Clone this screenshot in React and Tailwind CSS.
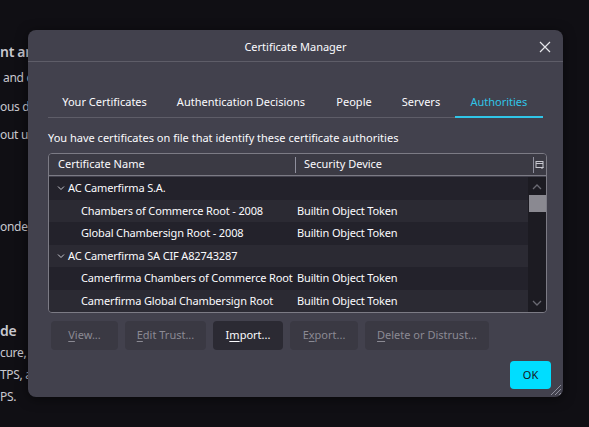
import React from 'react';

const rows = [
    { kind: 'group', name: 'AC Camerfirma S.A.', device: '' },
    { kind: 'item', name: 'Chambers of Commerce Root - 2008', device: 'Builtin Object Token' },
    { kind: 'item', name: 'Global Chambersign Root - 2008', device: 'Builtin Object Token' },
    { kind: 'group', name: 'AC Camerfirma SA CIF A82743287', device: '' },
    { kind: 'item', name: 'Camerfirma Chambers of Commerce Root', device: 'Builtin Object Token' },
    { kind: 'item', name: 'Camerfirma Global Chambersign Root', device: 'Builtin Object Token' },
];

const tabs = [
    { label: 'Your Certificates', w: 'w-[114px]' },
    { label: 'Authentication Decisions', w: 'w-[161px]' },
    { label: 'People', w: 'w-[67px]' },
    { label: 'Servers', w: 'w-[68px]' },
    { label: 'Authorities', w: 'w-[89px]' },
];

const Btn = ({ pre, u, post, enabled, w }) => (
    <button
        className={`h-[29px] rounded-[4px] text-[11px] ${w} ${enabled ? 'bg-[#2b2a33] text-[#fbfbfe]' : 'bg-[#3a3943] text-[#8b8a93]'}`}
    >
        {pre}<span className="underline underline-offset-2">{u}</span>{post}
    </button>
);

const App = () => {
    return (
        <div className="relative w-[589px] h-[427px] bg-[#100f14] overflow-hidden text-[#fbfbfe]" style={{ fontFamily: '"Noto Sans", "Open Sans", sans-serif' }}>
            {/* page behind the dialog */}
            <div className="absolute inset-0 text-[#c9c8cf] text-[12px] tracking-[-0.3px]">
                <p className="absolute top-[41px] left-0 text-[14px] font-semibold whitespace-nowrap">nt an</p>
                <p className="absolute top-[69px] left-[3px] whitespace-nowrap">and c</p>
                <p className="absolute top-[98px] left-0 whitespace-nowrap">ous d</p>
                <p className="absolute top-[126px] left-0 whitespace-nowrap">out ur</p>
                <p className="absolute top-[218px] left-0 whitespace-nowrap">onde</p>
                <p className="absolute top-[320px] left-0 text-[14px] font-semibold whitespace-nowrap">de</p>
                <p className="absolute top-[344px] left-0 whitespace-nowrap">cure,</p>
                <p className="absolute top-[366px] left-0 whitespace-nowrap">TPS, a</p>
                <p className="absolute top-[388px] left-0 whitespace-nowrap">PS.</p>
            </div>

            {/* dialog */}
            <div className="absolute left-[28px] top-[30px] w-[535px] h-[367px] bg-[#42414d] rounded-[8px] shadow-[0_2px_12px_rgba(0,0,0,0.5)] flex flex-col">
                <div className="h-[32px] flex items-center justify-center relative border-b border-[#5e5d68]">
                    <span className="text-[11px] mt-[3px]">Certificate Manager</span>
                    <svg className="absolute right-[12px] top-[11px]" width="12" height="12" viewBox="0 0 12 12">
                        <path d="M1 1 L11 11 M11 1 L1 11" stroke="#e6e6ea" strokeWidth="1.2" fill="none" />
                    </svg>
                </div>

                <div className="px-[20px] pt-[32px]">
                    <div className="flex border-b border-[#5e5d68] text-[11px] h-[24px]">
                        {tabs.map((t, i) => (
                            <div
                                key={t.label}
                                className={`h-[24px] leading-[16px] flex items-start justify-center ${t.w} ${i === 4 ? 'text-[#30c5e8] border-b-2 border-[#30c5e8] -mb-px' : ''}`}
                            >
                                {t.label}
                            </div>
                        ))}
                    </div>

                    <p className="text-[11px] mt-[12px] leading-[16px]">You have certificates on file that identify these certificate authorities</p>

                    <div className="mt-[7px] w-[499px] h-[160px] border border-[#7c7b85] rounded-[4px] overflow-hidden flex flex-col">
                        <div className="h-[22px] flex items-center text-[11px] bg-[#3b3a44] border-b border-[#7c7b85] shrink-0">
                            <div className="w-[247px] pl-[9px] border-r border-[#8f8f9d] h-[16px] flex items-center">Certificate Name</div>
                            <div className="w-[238px] pl-[8px] border-r border-[#8f8f9d] h-[16px] flex items-center">Security Device</div>
                            <div className="flex-1 flex items-center justify-center">
                                <svg width="10" height="10" viewBox="0 0 10 10">
                                    <rect x="1" y="1.5" width="7" height="6" fill="none" stroke="#c8c8d0" strokeWidth="1" />
                                    <path d="M1 3.5 H8" stroke="#c8c8d0" strokeWidth="1" />
                                    <path d="M5 7 L7 9 L9 7 Z" fill="#c8c8d0" />
                                </svg>
                            </div>
                        </div>
                        <div className="flex flex-1 pt-[1px]">
                            <div className="flex-1 flex flex-col">
                                {rows.map((r, i) => (
                                    <div key={i} className={`h-[22.5px] flex items-center text-[11px] tracking-[-0.15px] ${i % 2 === 0 ? 'bg-[#23222b]' : 'bg-[#2b2a33]'}`}>
                                        {r.kind === 'group' ? (
                                            <div className="pl-[8px] flex items-center gap-[3px]">
                                                <svg width="8" height="8" viewBox="0 0 8 8">
                                                    <path d="M1 2.5 L4 5.5 L7 2.5" stroke="#c8c8d0" strokeWidth="1" fill="none" />
                                                </svg>
                                                <span>{r.name}</span>
                                            </div>
                                        ) : (
                                            <>
                                                <div className="w-[248px] pl-[32px] whitespace-nowrap overflow-hidden">{r.name}</div>
                                                <div className="whitespace-nowrap">{r.device}</div>
                                            </>
                                        )}
                                    </div>
                                ))}
                            </div>
                            <div className="w-[18px] bg-[#1c1b22] flex flex-col items-center">
                                <svg className="mt-[6px]" width="10" height="8" viewBox="0 0 10 8">
                                    <path d="M1 6 L5 2 L9 6" stroke="#6a6972" strokeWidth="1.3" fill="none" />
                                </svg>
                                <div className="mt-[4px] w-[17px] h-[17px] bg-[#8a8991]" />
                                <div className="flex-1" />
                                <svg className="mb-[5px]" width="10" height="8" viewBox="0 0 10 8">
                                    <path d="M1 2 L5 6 L9 2" stroke="#6a6972" strokeWidth="1.3" fill="none" />
                                </svg>
                            </div>
                        </div>
                    </div>

                    <div className="mt-[8px] pl-[3px] flex gap-[7px]">
                        <Btn pre="" u="V" post="iew..." w="w-[67px]" />
                        <Btn pre="" u="E" post="dit Trust..." w="w-[81px]" />
                        <Btn pre="I" u="m" post="port..." w="w-[70px]" enabled />
                        <Btn pre="E" u="x" post="port..." w="w-[68px]" />
                        <Btn pre="" u="D" post="elete or Distrust..." w="w-[124px]" />
                    </div>
                </div>

                <div className="flex justify-end pr-[12px] mt-[11px]">
                    <button className="w-[41px] h-[28px] rounded-[4px] bg-[#00ddff] text-[#15141a] text-[11px]">OK</button>
                </div>

                <svg className="absolute right-[1px] bottom-[1px]" width="14" height="14" viewBox="0 0 14 14">
                    <path d="M13 3 L3 13 M13 7 L7 13 M13 11 L11 13" stroke="#8f8f9d" strokeWidth="1" />
                </svg>
            </div>
        </div>
    );
};

export default App;
